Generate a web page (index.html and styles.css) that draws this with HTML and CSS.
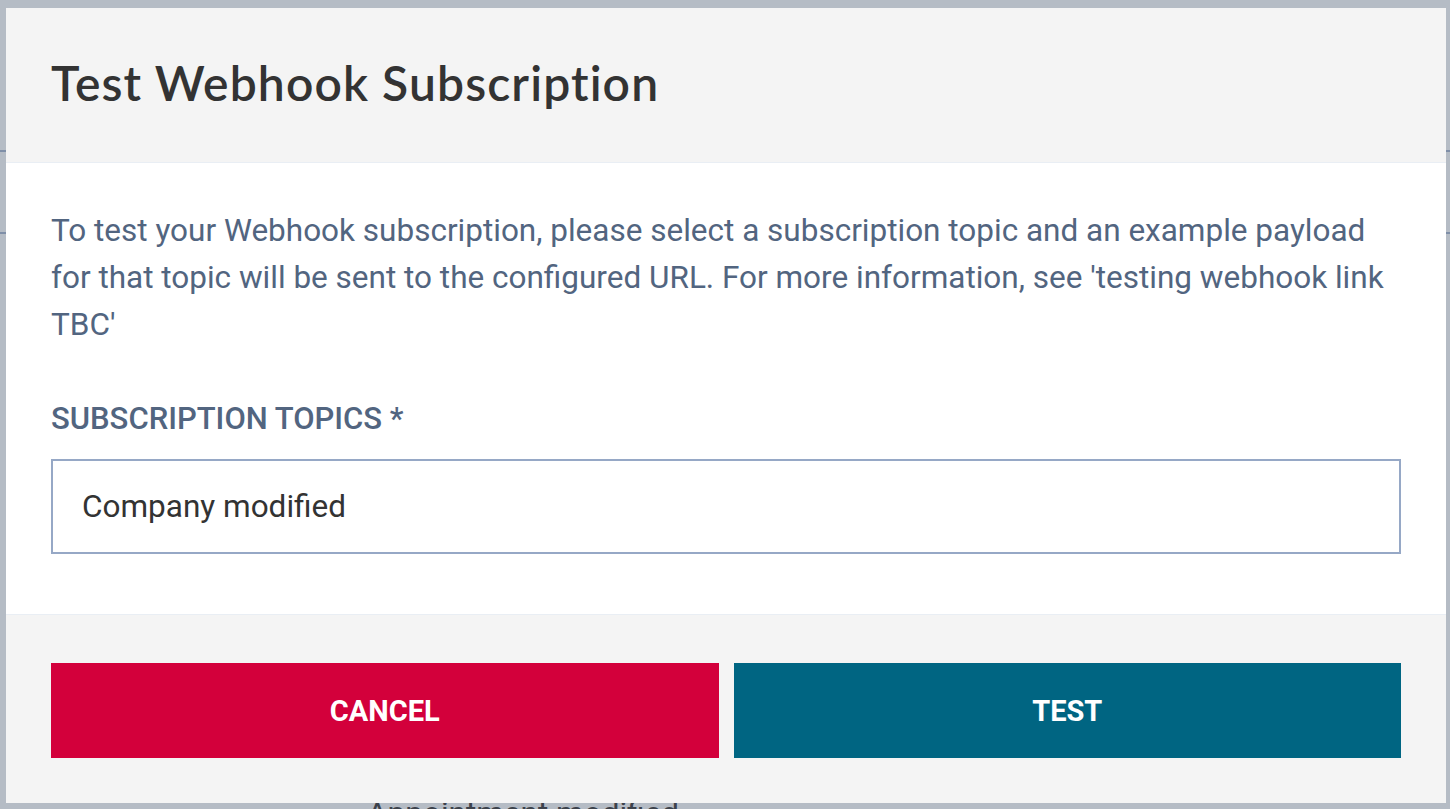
FILE: index.html
```html
<!DOCTYPE html>
<html lang="en">
<head>
<meta charset="utf-8">
<title>Test Webhook Subscription</title>
<link rel="stylesheet" href="styles.css">
</head>
<body>
<div class="page">
  <div class="page-rule rule-a"></div>
  <div class="page-rule rule-b"></div>
  <div class="page-item">Appointment modified</div>
</div>
<div class="overlay">
  <div class="modal" role="dialog" aria-labelledby="modal-title">
    <header class="modal-header">
      <h1 id="modal-title" class="modal-title">Test Webhook Subscription</h1>
    </header>
    <section class="modal-body">
      <p class="intro">To test your Webhook subscription, please select a subscription topic and an example payload for that topic will be sent to the configured URL. For more information, see 'testing webhook link TBC'</p>
      <label class="field-label" for="topic">SUBSCRIPTION TOPICS *</label>
      <div class="select-box" id="topic">Company modified</div>
    </section>
    <footer class="modal-footer">
      <button class="btn btn-cancel" type="button">CANCEL</button>
      <button class="btn btn-test" type="button">TEST</button>
    </footer>
  </div>
</div>
</body>
</html>
```
FILE: styles.css
```css
html, body {
  margin: 0;
  padding: 0;
  height: 100%;
  overflow: hidden;
}
body {
  background: #b5bcc5;
  font-family: Roboto, "Liberation Sans", Arial, sans-serif;
}
.page {
  padding-top: 150px;
}
.page-rule {
  height: 2px;
  background: #7f8fa8;
}
.rule-b {
  margin-top: 80px;
}
.page-item {
  margin-top: 560px;
  margin-left: 367px;
  font-size: 31.5px;
  line-height: 40px;
  color: #3c424b;
}
.overlay {
  position: fixed;
  inset: 0;
  display: flex;
  align-items: flex-start;
  padding: 8px 4px 6px 6px;
}
.modal {
  width: 1440px;
  display: flex;
  flex-direction: column;
  background: #ffffff;
}
.modal-header {
  background: #f4f4f4;
  padding: 46px 45px 50px;
  border-bottom: 1px solid #e9eef4;
}
.modal-title {
  margin: 0;
  font-family: Lato, "Open Sans", sans-serif;
  font-weight: 600;
  font-size: 48px;
  line-height: 58px;
  color: #333333;
  letter-spacing: 1.1px;
}
.modal-body {
  padding: 44px 45px 60px;
  color: #526580;
}
.intro {
  margin: 0 0 47px;
  font-size: 31.5px;
  line-height: 47px;
}
.field-label {
  display: block;
  font-size: 31px;
  line-height: 47px;
  font-weight: 500;
  margin-bottom: 17px;
}
.select-box {
  height: 91px;
  border: 2px solid #96a8c6;
  display: flex;
  align-items: center;
  padding-left: 29px;
  font-size: 31.5px;
  line-height: 47px;
  color: #333333;
}
.modal-footer {
  background: #f4f4f4;
  border-top: 1px solid #e9eef4;
  padding: 48px 45px 45px;
  display: flex;
  gap: 15px;
}
.btn {
  flex: 1;
  height: 95px;
  border: 0;
  margin: 0;
  font-family: Roboto, "Liberation Sans", Arial, sans-serif;
  font-weight: 700;
  font-size: 29px;
  color: #ffffff;
  cursor: pointer;
}
.btn-cancel {
  background: #d3003b;
}
.btn-test {
  background: #006582;
}
```
